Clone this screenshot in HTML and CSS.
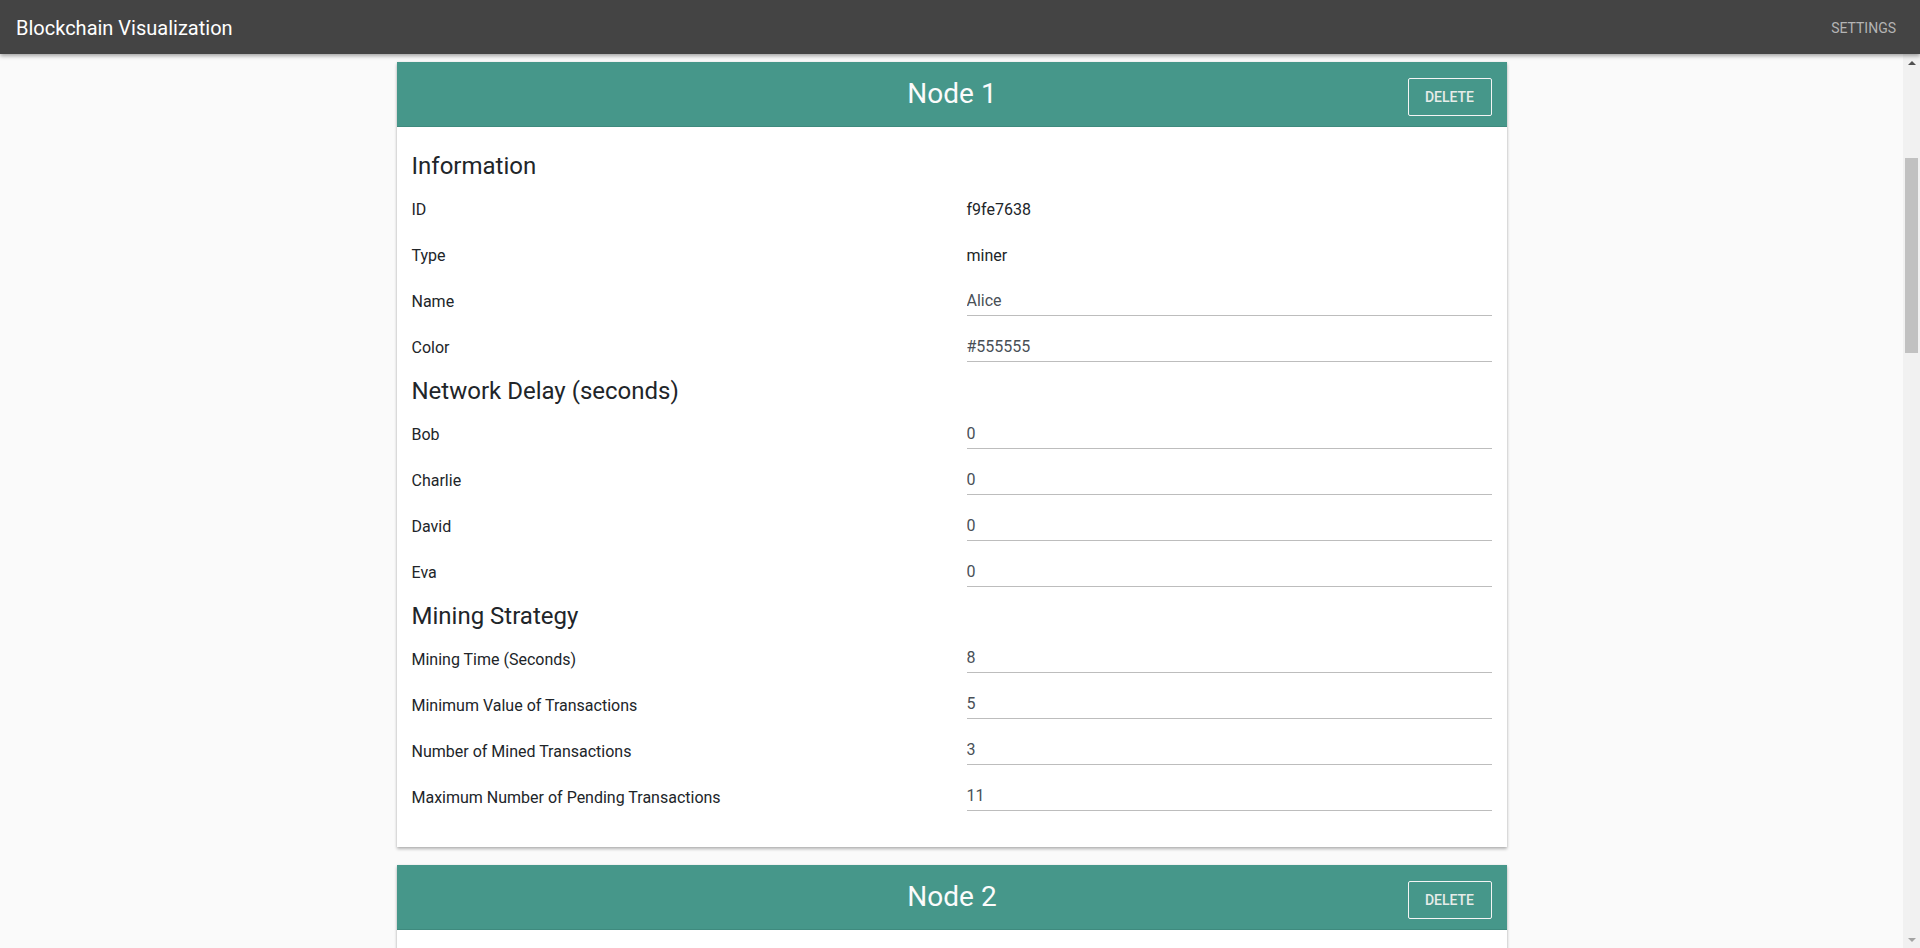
FILE: index.html
```html
<!DOCTYPE html>
<html lang="en">
<head>
<meta charset="utf-8">
<title>Blockchain Visualization</title>
<link rel="stylesheet" href="styles.css">
</head>
<body>
<header class="appbar">
  <div class="appbar-title">Blockchain Visualization</div>
  <button class="appbar-btn">Settings</button>
</header>
<div class="workspace">
<main class="scroller">
  <div class="container">

    <section class="card">
      <div class="card-head">
        <span></span>
        <h3 class="card-title">Node 1</h3>
        <button class="del-btn">Delete</button>
      </div>
      <div class="card-body">
        <h4 class="section">Information</h4>
        <div class="row"><span class="label">ID</span><span class="value">f9fe7638</span></div>
        <div class="row"><span class="label">Type</span><span class="value">miner</span></div>
        <div class="row"><span class="label">Name</span><input class="field" value="Alice"></div>
        <div class="row"><span class="label">Color</span><input class="field" value="#555555"></div>
        <h4 class="section">Network Delay (seconds)</h4>
        <div class="row"><span class="label">Bob</span><input class="field" value="0"></div>
        <div class="row"><span class="label">Charlie</span><input class="field" value="0"></div>
        <div class="row"><span class="label">David</span><input class="field" value="0"></div>
        <div class="row"><span class="label">Eva</span><input class="field" value="0"></div>
        <h4 class="section">Mining Strategy</h4>
        <div class="row"><span class="label">Mining Time (Seconds)</span><input class="field" value="8"></div>
        <div class="row"><span class="label">Minimum Value of Transactions</span><input class="field" value="5"></div>
        <div class="row"><span class="label">Number of Mined Transactions</span><input class="field" value="3"></div>
        <div class="row"><span class="label">Maximum Number of Pending Transactions</span><input class="field" value="11"></div>
      </div>
    </section>

    <section class="card">
      <div class="card-head">
        <span></span>
        <h3 class="card-title">Node 2</h3>
        <button class="del-btn">Delete</button>
      </div>
      <div class="card-body">
        <h4 class="section">Information</h4>
        <div class="row"><span class="label">ID</span><span class="value">3a1c90be</span></div>
        <div class="row"><span class="label">Type</span><span class="value">miner</span></div>
        <div class="row"><span class="label">Name</span><input class="field" value="Bob"></div>
        <div class="row"><span class="label">Color</span><input class="field" value="#555555"></div>
        <h4 class="section">Network Delay (seconds)</h4>
        <div class="row"><span class="label">Alice</span><input class="field" value="0"></div>
        <div class="row"><span class="label">Charlie</span><input class="field" value="0"></div>
        <div class="row"><span class="label">David</span><input class="field" value="0"></div>
        <div class="row"><span class="label">Eva</span><input class="field" value="0"></div>
        <h4 class="section">Mining Strategy</h4>
        <div class="row"><span class="label">Mining Time (Seconds)</span><input class="field" value="8"></div>
        <div class="row"><span class="label">Minimum Value of Transactions</span><input class="field" value="5"></div>
        <div class="row"><span class="label">Number of Mined Transactions</span><input class="field" value="3"></div>
        <div class="row"><span class="label">Maximum Number of Pending Transactions</span><input class="field" value="11"></div>
      </div>
    </section>

  </div>
</main>
<div class="vscroll" aria-hidden="true">
  <div class="vscroll-btn"><span class="arrow-up"></span></div>
  <div class="vscroll-track">
    <div class="vscroll-thumb"></div>
  </div>
  <div class="vscroll-btn"><span class="arrow-down"></span></div>
</div>
</div>
</body>
</html>
```
FILE: styles.css
```css
* { box-sizing: border-box; }

html, body {
  margin: 0;
  height: 100%;
}

body {
  display: flex;
  flex-direction: column;
  background: #fafafa;
  font-family: Roboto, "Liberation Sans", Arial, sans-serif;
  color: #212529;
  overflow: hidden;
}

.appbar {
  flex: 0 0 54px;
  height: 54px;
  background: #444444;
  display: flex;
  align-items: center;
  justify-content: space-between;
  padding: 0 24px 0 16px;
  box-shadow: 0 2px 4px rgba(0, 0, 0, 0.35);
  position: relative;
  z-index: 2;
}

.appbar-title {
  color: #ffffff;
  font-size: 20px;
  font-weight: 400;
  margin-top: 1px;
}

.appbar-btn {
  background: none;
  border: none;
  padding: 0;
  color: #b4b4b4;
  font-family: inherit;
  font-size: 14px;
  text-transform: uppercase;
  margin-top: 1px;
}

.workspace {
  flex: 1 1 auto;
  min-height: 0;
  display: flex;
}

.scroller {
  flex: 1 1 auto;
  min-width: 0;
  overflow: hidden;
  padding-top: 8px;
}

/* scrollbar column */
.vscroll {
  flex: 0 0 17px;
  width: 17px;
  background: #f1f1f1;
  display: flex;
  flex-direction: column;
}

.vscroll-btn {
  height: 17px;
  flex: 0 0 17px;
  display: flex;
  align-items: center;
  justify-content: center;
}

.arrow-up {
  width: 0;
  height: 0;
  border-left: 4px solid transparent;
  border-right: 4px solid transparent;
  border-bottom: 4px solid #505050;
}

.arrow-down {
  width: 0;
  height: 0;
  border-left: 4px solid transparent;
  border-right: 4px solid transparent;
  border-top: 4px solid #a3a3a3;
}

.vscroll-track {
  flex: 1 1 auto;
  padding: 87px 2px 0 2px;
}

.vscroll-thumb {
  height: 195px;
  background: #c1c1c1;
}

.container {
  width: 1110px;
  margin: 0 auto;
}

.card {
  background: #ffffff;
  box-shadow: 0 2px 3px rgba(0, 0, 0, 0.28), 0 0 2px rgba(0, 0, 0, 0.08);
  margin-bottom: 18px;
}

.card-head {
  height: 65px;
  background: #46978a;
  border-bottom: 1px solid #3f8a7e;
  display: grid;
  grid-template-columns: 1fr auto 1fr;
  align-items: center;
  padding: 0 15px 0 16px;
}

.card-title {
  margin: 0;
  font-size: 28px;
  font-weight: 400;
  color: #fbfbfb;
  line-height: 1;
}

.del-btn {
  justify-self: end;
  margin-top: 5px;
  height: 38px;
  width: 84px;
  background: transparent;
  border: 1px solid #f4f4f4;
  border-radius: 2px;
  color: #e6ece9;
  font-family: inherit;
  font-size: 14px;
  font-weight: 500;
  text-transform: uppercase;
  padding: 0;
}

.card-body {
  padding: 19px 15px 27px 15px;
}

.section {
  margin: 6px 0;
  font-size: 24px;
  font-weight: 400;
  line-height: 28.8px;
  color: #212529;
}

.row {
  display: grid;
  grid-template-columns: 1fr 1fr;
  column-gap: 30px;
  height: 46px;
  align-items: center;
  font-size: 16px;
}

.label {
  color: #212529;
}

.value {
  color: #212529;
}

.field {
  width: 100%;
  height: 28px;
  border: none;
  border-bottom: 1px solid #bdbdbd;
  background: transparent;
  padding: 0 0 2px 0;
  font-family: inherit;
  font-size: 16px;
  color: #495057;
  outline: none;
}
```
